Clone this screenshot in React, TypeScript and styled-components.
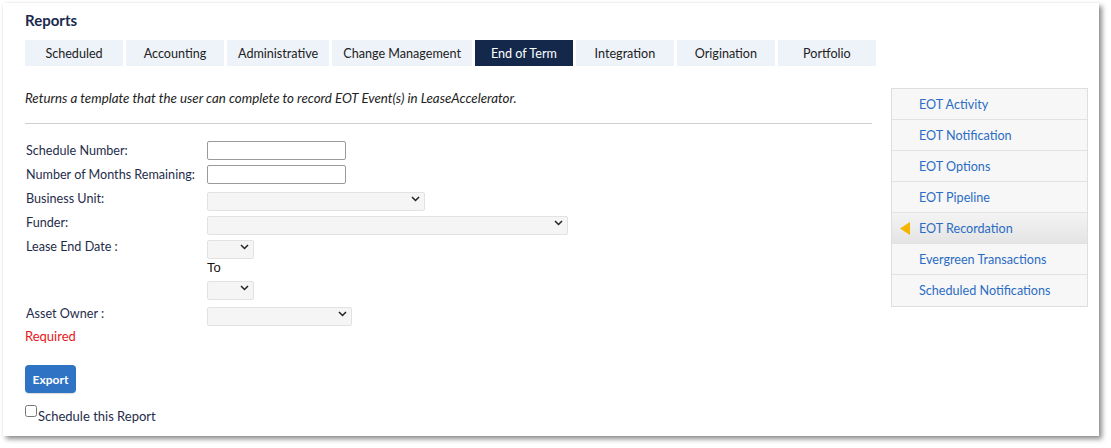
import React from "react";
import styled, { createGlobalStyle } from "styled-components";

const Global = createGlobalStyle`
  html, body { margin: 0; padding: 0; background: #ffffff; }
  body { font-family: Lato, "Open Sans", Arial, sans-serif; }
  * { box-sizing: border-box; }
`;

const Page = styled.div`
  padding: 3px 0 0 3px;
  width: 1111px;
  height: 448px;
`;

const Panel = styled.div`
  width: 1096px;
  height: 433px;
  background: #ffffff;
  box-shadow: 3px 3px 5px rgba(0, 0, 0, 0.45), 0 0 2px rgba(0, 0, 0, 0.06);
  padding: 8px 11px 0 22px;
`;

const Title = styled.h1`
  margin: 0;
  font-size: 15px;
  line-height: 19px;
  font-weight: 700;
  color: #1b2a4e;
`;

const TabBar = styled.div`
  display: flex;
  gap: 3px;
  margin-top: 10px;
`;

const Tab = styled.div<{ $active?: boolean }>`
  min-width: 98px;
  height: 26px;
  padding: 0 11px;
  display: flex;
  align-items: center;
  justify-content: center;
  font-size: 12.6px;
  color: ${(p) => (p.$active ? "#ffffff" : "#222222")};
  background: ${(p) => (p.$active ? "#13284a" : "#eef3f9")};
  white-space: nowrap;
`;

const Main = styled.div`
  display: flex;
  align-items: flex-start;
  gap: 19px;
  margin-top: 22px;
`;

const LeftCol = styled.div`
  width: 847px;
  flex-shrink: 0;
`;

const Description = styled.p`
  margin: 0;
  padding-top: 2px;
  font-size: 13.3px;
  line-height: 16px;
  font-style: italic;
  color: #222222;
`;

const Rule = styled.hr`
  margin: 17px 0 0 0;
  border: none;
  border-top: 1px solid #cfcfcf;
  height: 0;
`;

const Form = styled.div`
  display: grid;
  grid-template-columns: 181px auto;
  row-gap: 5px;
  margin-top: 17px;
  padding-left: 1px;
`;

const Label = styled.div`
  font-size: 12.6px;
  line-height: 18px;
  padding-top: 1px;
  color: #1f2d4b;
  white-space: nowrap;
`;

const Control = styled.div`
  display: flex;
  flex-direction: column;
  align-items: flex-start;
`;

const TextInput = styled.input`
  width: 139px;
  height: 19px;
  border: 1px solid #9a9a9a;
  border-radius: 2px;
  background: #ffffff;
  padding: 0 3px;
  font-size: 12px;
  margin: 0;
`;

const SelectWrap = styled.div<{ $w: number }>`
  position: relative;
  width: ${(p) => p.$w}px;
  height: 19px;
`;

const SelectBox = styled.select`
  appearance: none;
  -webkit-appearance: none;
  width: 100%;
  height: 100%;
  margin: 0;
  border: 1px solid #e2e2e2;
  border-radius: 2px;
  background: #f5f5f5;
  font-size: 12px;
  padding: 0 4px;
`;

const Chevron = styled.svg`
  position: absolute;
  right: 5px;
  top: 7px;
  width: 9px;
  height: 6px;
  pointer-events: none;
`;

const ToText = styled.div`
  font-family: "Liberation Sans", Arial, sans-serif;
  font-size: 13px;
  line-height: 20px;
  padding-top: 2px;
  color: #111111;
`;

const Stack = styled.div`
  display: flex;
  flex-direction: column;
  padding-bottom: 2px;
`;

const Required = styled.div`
  margin-top: 5px;
  font-size: 13px;
  line-height: 16px;
  color: #e8141b;
`;

const ExportButton = styled.button`
  margin-top: 21px;
  width: 51px;
  height: 28px;
  border: none;
  border-radius: 4px;
  background: #2f74c4;
  color: #ffffff;
  font-family: Lato, Arial, sans-serif;
  font-weight: 700;
  font-size: 12px;
  padding: 0;
  box-shadow: 0 1px 1px rgba(0, 0, 0, 0.15);
`;

const CheckRow = styled.label`
  display: flex;
  align-items: flex-start;
  margin-top: 11px;
  font-size: 13px;
  line-height: 16px;
  color: #1f2d4b;
`;

const CheckBox = styled.input`
  width: 12px;
  height: 12px;
  margin: 1px 1px 0 0;
`;

const CheckText = styled.span`
  padding-top: 4px;
`;

const SideMenu = styled.div`
  width: 197px;
  border: 1px solid #dedede;
  background: #f7f7f7;
`;

const SideItem = styled.div<{ $active?: boolean }>`
  position: relative;
  height: 31px;
  display: flex;
  align-items: center;
  padding-left: 27px;
  font-size: 12.6px;
  color: #2b6cc4;
  border-bottom: 1px solid #e2e2e2;
  background: ${(p) =>
    p.$active ? "linear-gradient(#f3f3f3, #e4e4e4)" : "#f7f7f7"};
  &:last-child {
    border-bottom: none;
  }
`;

const Marker = styled.svg`
  position: absolute;
  left: 8px;
  top: 9px;
  width: 10px;
  height: 13px;
`;

const tabs = [
  "Scheduled",
  "Accounting",
  "Administrative",
  "Change Management",
  "End of Term",
  "Integration",
  "Origination",
  "Portfolio",
];

const sideItems = [
  "EOT Activity",
  "EOT Notification",
  "EOT Options",
  "EOT Pipeline",
  "EOT Recordation",
  "Evergreen Transactions",
  "Scheduled Notifications",
];

const Select: React.FC<{ w: number }> = ({ w }) => (
  <SelectWrap $w={w}>
    <SelectBox defaultValue="">
      <option value=""></option>
    </SelectBox>
    <Chevron viewBox="0 0 9 6">
      <path d="M1 1 L4.5 4.5 L8 1" fill="none" stroke="#222" strokeWidth="1.5" />
    </Chevron>
  </SelectWrap>
);

export default function App() {
  return (
    <Page>
      <Global />
      <Panel>
        <Title>Reports</Title>
        <TabBar>
          {tabs.map((t) => (
            <Tab key={t} $active={t === "End of Term"}>
              {t}
            </Tab>
          ))}
        </TabBar>
        <Main>
          <LeftCol>
            <Description>
              Returns a template that the user can complete to record EOT Event(s) in LeaseAccelerator.
            </Description>
            <Rule />
            <Form>
              <Label>Schedule Number:</Label>
              <Control>
                <TextInput type="text" />
              </Control>
              <Label>Number of Months Remaining:</Label>
              <Control>
                <TextInput type="text" />
              </Control>
              <Label>Business Unit:</Label>
              <Control>
                <Select w={218} />
              </Control>
              <Label>Funder:</Label>
              <Control>
                <Select w={361} />
              </Control>
              <Label>Lease End Date :</Label>
              <Control>
                <Stack>
                  <Select w={47} />
                  <ToText>To</ToText>
                  <Select w={47} />
                </Stack>
              </Control>
              <Label>Asset Owner :</Label>
              <Control>
                <Select w={145} />
              </Control>
            </Form>
            <Required>Required</Required>
            <ExportButton>Export</ExportButton>
            <CheckRow>
              <CheckBox type="checkbox" />
              <CheckText>Schedule this Report</CheckText>
            </CheckRow>
          </LeftCol>
          <SideMenu>
            {sideItems.map((s) => (
              <SideItem key={s} $active={s === "EOT Recordation"}>
                {s === "EOT Recordation" && (
                  <Marker viewBox="0 0 10 13">
                    <path d="M10 0 L0 6.5 L10 13 Z" fill="#f5b400" />
                  </Marker>
                )}
                {s}
              </SideItem>
            ))}
          </SideMenu>
        </Main>
      </Panel>
    </Page>
  );
}
